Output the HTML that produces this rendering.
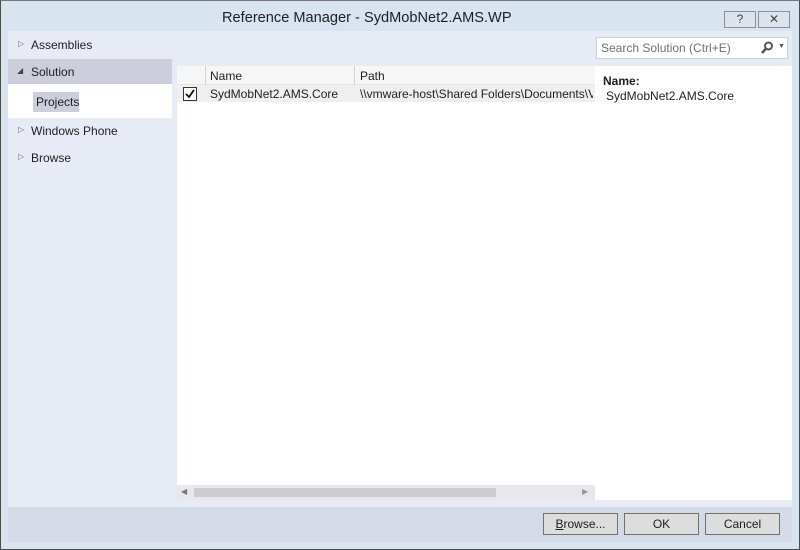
<!DOCTYPE html>
<html><head><style>
*{margin:0;padding:0;box-sizing:border-box}
body{width:800px;height:550px;position:relative;background:#d9e4f1;font-family:"Liberation Sans",sans-serif;font-size:12px;color:#1e1e1e;overflow:hidden}
.a{position:absolute}
.frame{left:0;top:0;width:800px;height:550px;border:1px solid #4d4d4d;border-top-color:#777}
.btn{background:#dddddd;border:1px solid #707070;text-align:center;line-height:20px;height:22px;font-size:12px}
.tb{border:1px solid #8a8f99;background:#dde3ec;width:32px;height:17px;text-align:center;font-size:12px;line-height:15px;color:#444}
</style></head><body>
<div class="a frame"></div>
<div class="a" style="left:222px;top:10px;font-size:14.6px;color:#1e1e1e;white-space:nowrap">Reference Manager - SydMobNet2.AMS.WP</div>
<div class="a tb" style="left:724px;top:11px">?</div>
<div class="a tb" style="left:758px;top:11px">✕</div>
<div class="a" style="left:8px;top:31px;width:784px;height:476px;background:#e7ebf6"></div>
<div class="a" style="left:8px;top:507px;width:784px;height:35px;background:#d5dae7"></div>
<!-- left nav -->
<div class="a" style="left:18px;top:39px;font-size:8px;color:#666">▷</div>
<div class="a" style="left:31px;top:38px">Assemblies</div>
<div class="a" style="left:8px;top:59px;width:164px;height:25px;background:#cccedb"></div>
<div class="a" style="left:17px;top:66px;font-size:8px;color:#444">◢</div>
<div class="a" style="left:31px;top:65px">Solution</div>
<div class="a" style="left:8px;top:84px;width:164px;height:34px;background:#fff"></div>
<div class="a" style="left:33px;top:92px;width:46px;height:20px;background:#cccedb"></div>
<div class="a" style="left:36px;top:95px">Projects</div>
<div class="a" style="left:18px;top:125px;font-size:8px;color:#666">▷</div>
<div class="a" style="left:31px;top:124px">Windows Phone</div>
<div class="a" style="left:18px;top:152px;font-size:8px;color:#666">▷</div>
<div class="a" style="left:31px;top:151px">Browse</div>
<!-- search -->
<div class="a" style="left:596px;top:37px;width:192px;height:22px;background:#fff;border:1px solid #ccd0da"></div>
<div class="a" style="left:601px;top:41px;color:#707070">Search Solution (Ctrl+E)</div>
<svg class="a" style="left:760px;top:41px" width="14" height="14"><circle cx="8.5" cy="5" r="3.5" fill="none" stroke="#555" stroke-width="2"/><path d="M6 7.5 L2 12" stroke="#555" stroke-width="2.5"/></svg>
<div class="a" style="left:778px;top:43px;font-size:7px;color:#555">▼</div>
<!-- grid -->
<div class="a" style="left:177px;top:66px;width:418px;height:434px;background:#fff"></div>
<div class="a" style="left:177px;top:66px;width:418px;height:19px;background:#f6f6f6;border-bottom:1px solid #e5e5e5"></div>
<div class="a" style="left:205px;top:66px;width:1px;height:19px;background:#d5d5d5"></div>
<div class="a" style="left:354px;top:66px;width:1px;height:19px;background:#d5d5d5"></div>
<div class="a" style="left:210px;top:69px">Name</div>
<div class="a" style="left:360px;top:69px">Path</div>
<div class="a" style="left:177px;top:85px;width:418px;height:17px;background:#efefef"></div>
<div class="a" style="left:183px;top:87px;width:14px;height:14px;border:1px solid #333;background:#fff"></div>
<svg class="a" style="left:183px;top:87px" width="14" height="14"><path d="M3 7 L6 10 L11 3" fill="none" stroke="#111" stroke-width="1.8"/></svg>
<div class="a" style="left:210px;top:87px">SydMobNet2.AMS.Core</div>
<div class="a" style="left:360px;top:87px;width:233px;overflow:hidden;white-space:nowrap">\\vmware-host\Shared Folders\Documents\Visual</div>
<div class="a" style="left:177px;top:485px;width:418px;height:15px;background:#e8e8ec"></div>
<div class="a" style="left:194px;top:488px;width:302px;height:9px;background:#cdcdd1"></div>
<div class="a" style="left:181px;top:487px;font-size:8px;color:#777">◀</div>
<div class="a" style="left:582px;top:487px;font-size:8px;color:#999">▶</div>
<!-- details -->
<div class="a" style="left:595px;top:66px;width:197px;height:434px;background:#fff"></div>
<div class="a" style="left:603px;top:74px;font-weight:bold">Name:</div>
<div class="a" style="left:606px;top:89px">SydMobNet2.AMS.Core</div>
<!-- buttons -->
<div class="a btn" style="left:543px;top:513px;width:75px"><u>B</u>rowse...</div>
<div class="a btn" style="left:624px;top:513px;width:75px">OK</div>
<div class="a btn" style="left:705px;top:513px;width:75px">Cancel</div>
</body></html>
